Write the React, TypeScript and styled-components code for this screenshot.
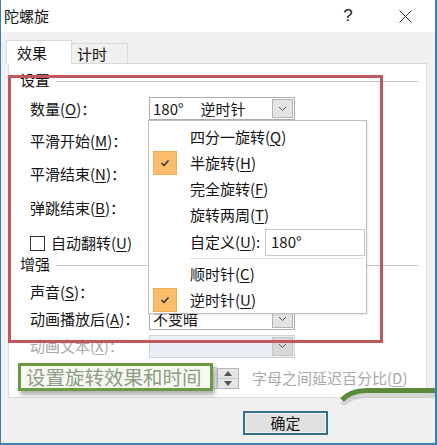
import React from "react";
import styled, { createGlobalStyle } from "styled-components";

const Global = createGlobalStyle`
  html, body { margin: 0; padding: 0; background: #f0f0f0; }
  body { font-family: "Noto Sans CJK SC", "Noto Sans", sans-serif; }
  * { box-sizing: border-box; }
`;

const Window = styled.div`
  position: relative;
  width: 437px;
  height: 445px;
  border-left: 1px solid #3b7db5;
  border-right: 2px solid #3b7db5;
  border-bottom: 2px solid #3b7db5;
  background: #f0f0f0;
  display: flex;
  flex-direction: column;
  overflow: hidden;
  font-size: 15px;
  line-height: 20px;
  color: #141414;
`;

const TitleBar = styled.div`
  height: 32px;
  flex: none;
  background: #fff;
  display: flex;
  align-items: center;
  padding-left: 3px;
`;

const Title = styled.div`
  flex: 1;
  font-size: 15px;
`;

const TitleButton = styled.div<{ $mr: number }>`
  width: 46px;
  height: 32px;
  margin-right: ${(p) => p.$mr}px;
  display: flex;
  align-items: center;
  justify-content: center;
  font-family: "Liberation Sans", sans-serif;
  font-size: 17px;
  color: #222;
`;

const Body = styled.div`
  flex: 1;
  display: flex;
  flex-direction: column;
  padding: 8px 7px 0 7px;
`;

const Tabs = styled.div`
  display: flex;
  align-items: flex-end;
  height: 23px;
  margin-left: -2px;
`;

const Tab = styled.div<{ $active?: boolean }>`
  position: relative;
  z-index: 1;
  height: ${(p) => (p.$active ? 24 : 20)}px;
  width: ${(p) => (p.$active ? 66 : 56)}px;
  margin-bottom: ${(p) => (p.$active ? -1 : 0)}px;
  padding-left: ${(p) => (p.$active ? 10 : 5)}px;
  padding-top: ${(p) => (p.$active ? 2 : 0)}px;
  background: ${(p) => (p.$active ? "#fff" : "#f0f0f0")};
  border: 1px solid #d9d9d9;
  border-bottom: none;
  border-left: ${(p) => (p.$active ? "1px solid #d9d9d9" : "none")};
  font-size: 15px;
  line-height: 20px;
`;

const Panel = styled.div`
  width: 419px;
  height: 335px;
  flex: none;
  background: #fff;
  border: 1px solid #d9d9d9;
  display: flex;
  flex-direction: column;
  padding: 0 8px 0 11px;
`;

const GroupHeader = styled.div<{ $mt: number }>`
  display: flex;
  align-items: center;
  height: 20px;
  margin-top: ${(p) => p.$mt}px;
`;

const GroupLine = styled.div`
  flex: 1;
  height: 1px;
  margin: 2px 0 0 6px;
  background: #c8c8c8;
`;

const Row = styled.div<{ $mt: number; $h?: number; $indent?: number }>`
  display: flex;
  align-items: center;
  height: ${(p) => p.$h ?? 22}px;
  margin-top: ${(p) => p.$mt}px;
  padding-left: ${(p) => p.$indent ?? 10}px;
`;

const Label = styled.div<{ $disabled?: boolean }>`
  width: 119px;
  flex: none;
  white-space: nowrap;
  color: ${(p) => (p.$disabled ? "#a8a8a8" : "#141414")};
`;

const Key = styled.span`
  text-decoration: underline;
  text-underline-offset: 2px;
`;

const Select = styled.div<{ $disabled?: boolean }>`
  width: 146px;
  height: 23px;
  display: flex;
  align-items: center;
  padding-left: 3px;
  border: 1px solid ${(p) => (p.$disabled ? "#cdd3da" : "#acacac")};
  background: ${(p) => (p.$disabled ? "#eaeff5" : "#fff")};
  white-space: nowrap;
`;

const SelectText = styled.span<{ $ml?: number }>`
  margin-left: ${(p) => p.$ml ?? 0}px;
`;

const DropButton = styled.div<{ $disabled?: boolean }>`
  margin-left: auto;
  margin-right: 1px;
  width: 21px;
  height: 19px;
  display: flex;
  align-items: center;
  justify-content: center;
  background: ${(p) => (p.$disabled ? "#d8d8d8" : "#e4e4e4")};
  border: 1px solid ${(p) => (p.$disabled ? "#c4c4c4" : "#b4b4b4")};
`;

const CheckBox = styled.div`
  width: 15px;
  height: 15px;
  margin-right: 6px;
  border: 1px solid #333;
  background: #fff;
  flex: none;
`;

const NumberBox = styled.div`
  width: 68px;
  height: 22px;
  border: 1px solid #cdd3da;
  background: #eaeff5;
`;

const Spinner = styled.div`
  width: 22px;
  height: 21px;
  display: flex;
  flex-direction: column;
  border: 1px solid #b8b8b8;
  background: #e6e6e6;
`;

const SpinHalf = styled.div`
  flex: 1;
  display: flex;
  align-items: center;
  justify-content: center;
  & + & { border-top: 1px solid #c4c4c4; }
`;

const DisabledText = styled.div`
  margin-left: 13px;
  color: #a8a8a8;
  white-space: nowrap;
`;

const BottomBar = styled.div`
  display: flex;
  padding: 13px 0 0 235px;
`;

const Button = styled.div`
  width: 85px;
  height: 24px;
  display: flex;
  align-items: center;
  justify-content: center;
  background: #e1e1e1;
  border: 2px solid #33708f;
  box-shadow: inset 0 0 0 1px #f4f4f4;
  font-size: 15px;
`;

/* popup menu (overlay) */
const Menu = styled.div`
  position: absolute;
  left: 147px;
  top: 120px;
  width: 219px;
  height: 194px;
  z-index: 5;
  background: #fff;
  border: 1px solid #bdbdbd;
  padding-top: 3px;
  display: flex;
  flex-direction: column;
  box-shadow: 1px 1px 2px rgba(0, 0, 0, 0.08);
`;

const MenuItem = styled.div<{ $h?: number }>`
  display: flex;
  align-items: center;
  height: ${(p) => p.$h ?? 26}px;
  padding-left: 4px;
  white-space: nowrap;
`;

const CheckSlot = styled.div<{ $on?: boolean }>`
  width: 24px;
  height: 24px;
  margin-right: 13px;
  flex: none;
  display: flex;
  align-items: center;
  justify-content: center;
  background: ${(p) => (p.$on ? "#fbbd6c" : "transparent")};
  border: 1px solid ${(p) => (p.$on ? "#f3ad58" : "transparent")};
`;

const MenuSep = styled.div`
  height: 1px;
  margin: 2px 2px 2px 41px;
  background: #e2e2e2;
`;

const MenuInput = styled.div`
  margin-left: auto;
  margin-right: 1px;
  width: 100px;
  height: 27px;
  border: 1px solid #c8c8c8;
  padding-left: 5px;
  display: flex;
  align-items: center;
`;

/* annotations (overlay) */
const RedFrame = styled.div`
  position: absolute;
  left: 7px;
  top: 75px;
  width: 375px;
  height: 268px;
  border: 3px solid #c2585d;
  z-index: 6;
  pointer-events: none;
`;

const GreenNote = styled.div`
  position: absolute;
  left: 17px;
  top: 363px;
  width: 195px;
  height: 28px;
  z-index: 7;
  border: 3px solid #6c9a42;
  background: #f7f9f0;
  color: #8e9b87;
  font-size: 19.5px;
  line-height: 22px;
  padding-left: 5px;
  display: flex;
  align-items: center;
  white-space: nowrap;
  box-shadow: 2px 4px 4px rgba(0, 0, 0, 0.3);
`;

const Swoosh = styled.svg`
  position: absolute;
  left: 337px;
  top: 385px;
  z-index: 7;
`;

const Chevron = () => (
  <svg width="9" height="6" viewBox="0 0 9 6">
    <path d="M1 1 L4.5 4.5 L8 1" fill="none" stroke="#555" strokeWidth="1" />
  </svg>
);

const Tick = () => (
  <svg width="10" height="8" viewBox="0 0 10 8">
    <path d="M1.5 4 L4 6.5 L8.5 1.5" fill="none" stroke="#2a2a2a" strokeWidth="1.4" />
  </svg>
);

const Arrow = ({ up }: { up?: boolean }) => (
  <svg width="8" height="5" viewBox="0 0 8 5">
    <path d={up ? "M0 5 L4 0 L8 5 Z" : "M0 0 L4 5 L8 0 Z"} fill="#555" />
  </svg>
);

export default function App() {
  return (
    <>
      <Global />
      <Window>
        <TitleBar>
          <Title>陀螺旋</Title>
          <TitleButton $mr={11}>?</TitleButton>
          <TitleButton $mr={7}>
            <svg width="13" height="13" viewBox="0 0 13 13">
              <path d="M0.5 0.5 L12.5 12.5 M12.5 0.5 L0.5 12.5" stroke="#333" strokeWidth="1" />
            </svg>
          </TitleButton>
        </TitleBar>
        <Body>
          <Tabs>
            <Tab $active>效果</Tab>
            <Tab>计时</Tab>
          </Tabs>
          <Panel>
            <GroupHeader $mt={6}>
              设置
              <GroupLine />
            </GroupHeader>
            <Row $mt={7} $h={23}>
              <Label>数量(<Key>O</Key>)：</Label>
              <Select>
                <SelectText>180°</SelectText>
                <SelectText $ml={17}>逆时针</SelectText>
                <DropButton>
                  <Chevron />
                </DropButton>
              </Select>
            </Row>
            <Row $mt={10}>
              <Label>平滑开始(<Key>M</Key>)：</Label>
            </Row>
            <Row $mt={11}>
              <Label>平滑结束(<Key>N</Key>)：</Label>
            </Row>
            <Row $mt={12}>
              <Label>弹跳结束(<Key>B</Key>)：</Label>
            </Row>
            <Row $mt={13}>
              <CheckBox />
              <Label>自动翻转(<Key>U</Key>)</Label>
            </Row>
            <GroupHeader $mt={0}>
              增强
              <GroupLine />
            </GroupHeader>
            <Row $mt={7}>
              <Label>声音(<Key>S</Key>)：</Label>
            </Row>
            <Row $mt={4} $h={23}>
              <Label>动画播放后(<Key>A</Key>)：</Label>
              <Select>
                <SelectText>不变暗</SelectText>
                <DropButton>
                  <Chevron />
                </DropButton>
              </Select>
            </Row>
            <Row $mt={5}>
              <Label $disabled>动画文本(<Key>X</Key>)：</Label>
              <Select $disabled>
                <DropButton $disabled>
                  <Chevron />
                </DropButton>
              </Select>
            </Row>
            <Row $mt={10} $indent={129}>
              <NumberBox />
              <Spinner>
                <SpinHalf>
                  <Arrow up />
                </SpinHalf>
                <SpinHalf>
                  <Arrow />
                </SpinHalf>
              </Spinner>
              <DisabledText>
                字母之间延迟百分比(<Key>D</Key>)
              </DisabledText>
            </Row>
          </Panel>
          <BottomBar>
            <Button>确定</Button>
          </BottomBar>
        </Body>

        <Menu>
          <MenuItem>
            <CheckSlot />
            四分一旋转(<Key>Q</Key>)
          </MenuItem>
          <MenuItem>
            <CheckSlot $on>
              <Tick />
            </CheckSlot>
            半旋转(<Key>H</Key>)
          </MenuItem>
          <MenuItem>
            <CheckSlot />
            完全旋转(<Key>F</Key>)
          </MenuItem>
          <MenuItem>
            <CheckSlot />
            旋转两周(<Key>T</Key>)
          </MenuItem>
          <MenuItem $h={28}>
            <CheckSlot />
            自定义(<Key>U</Key>):
            <MenuInput>180°</MenuInput>
          </MenuItem>
          <MenuSep />
          <MenuItem>
            <CheckSlot />
            顺时针(<Key>C</Key>)
          </MenuItem>
          <MenuItem>
            <CheckSlot $on>
              <Tick />
            </CheckSlot>
            逆时针(<Key>U</Key>)
          </MenuItem>
        </Menu>

        <RedFrame />
        <GreenNote>设置旋转效果和时间</GreenNote>
        <Swoosh width="100" height="20" viewBox="0 0 100 20">
          <path d="M4 17 Q12 8 28 7.5 L100 7.5" fill="none" stroke="#c4c4c4" strokeWidth="5" opacity="0.7" transform="translate(0 3)" />
          <path d="M4 15 Q12 6 28 5.5 L100 5.5" fill="none" stroke="#5b8a3a" strokeWidth="5" />
        </Swoosh>
      </Window>
    </>
  );
}
